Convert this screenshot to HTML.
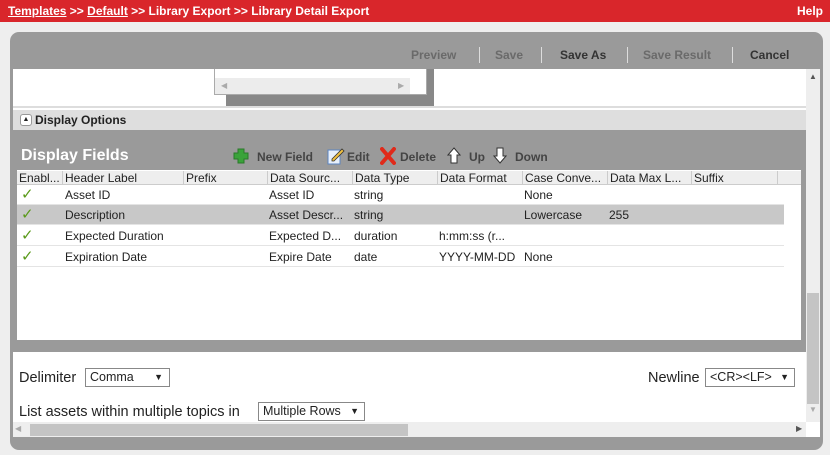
<!DOCTYPE html>
<html><head><style>
*{margin:0;padding:0;box-sizing:border-box}
body{width:830px;height:455px;background:#eeeeee;font-family:"Liberation Sans",sans-serif;font-size:12px;color:#222;position:relative;overflow:hidden}
.a{position:absolute}
.top{left:0;top:0;width:830px;height:22px;background:#d9262b;color:#fff;font-weight:bold;font-size:12px;line-height:22px;padding-left:8px}
.top u{color:#fff}
.panel{left:10px;top:32px;width:813px;height:418px;background:#9a9a9a;border-radius:9px}
.tb{top:48px;font-weight:bold;font-size:12px;color:#6a6a6a}
.sep{top:47px;width:1px;height:16px;background:#ddd}
.th{top:171px;height:14px;line-height:14px;font-size:12px}
.col{position:absolute;top:0;height:14px;border-left:1px solid #ccc;padding-left:2px;white-space:nowrap}
.row{left:17px;width:767px;height:20px;line-height:20px;border-bottom:1px solid #e4e4e4}
.row span{position:absolute;top:0;white-space:nowrap}
.sel{border:1px solid #888;background:#fff;height:19px;line-height:17px;padding-left:4px;font-size:12.5px}
.lbl{font-size:14.5px}
</style></head><body>
<div class="a top"><u>Templates</u> &gt;&gt; <u>Default</u> &gt;&gt; Library Export &gt;&gt; Library Detail Export<span style="position:absolute;right:7px">Help</span></div>
<div class="a panel"></div>
<div class="a tb" style="left:411px">Preview</div>
<div class="a sep" style="left:479px"></div>
<div class="a tb" style="left:495px">Save</div>
<div class="a sep" style="left:541px"></div>
<div class="a tb" style="left:560px;color:#333">Save As</div>
<div class="a sep" style="left:627px"></div>
<div class="a tb" style="left:643px">Save Result</div>
<div class="a sep" style="left:732px"></div>
<div class="a tb" style="left:750px;color:#333">Cancel</div>
<div class="a" style="left:13px;top:69px;width:793px;height:368px;background:#fff"></div>
<div class="a" style="left:226px;top:69px;width:208px;height:38px;background:#888"></div>
<div class="a" style="left:214px;top:69px;width:213px;height:26px;background:#fff;border:1px solid #aaa;border-top:none"></div>
<div class="a" style="left:215px;top:78px;width:195px;height:16px;background:#ececec;font-size:8px;color:#aaa;line-height:16px;padding-left:6px">◀<span style="position:absolute;left:183px">▶</span></div>
<div class="a" style="left:13px;top:106px;width:793px;height:2px;background:#ddd"></div>
<div class="a" style="left:13px;top:110px;width:793px;height:20px;background:#dedede;font-weight:bold;font-size:12px;line-height:20px;padding-left:22px;color:#222">Display Options</div>
<div class="a" style="left:20px;top:114px;width:12px;height:12px;background:#fff;border:1px solid #999;border-radius:3px;font-size:7px;line-height:10px;text-align:center">▲</div>
<div class="a" style="left:13px;top:130px;width:793px;height:222px;background:#9a9a9a"></div>
<div class="a" style="left:21px;top:147px;color:#fff;font-weight:bold;font-size:16px">Display Fields</div>
<div class="a" style="left:233px;top:148px;width:16px;height:16px"><svg width="16" height="16"><path d="M5 1h6v4h4v6h-4v4H5v-4H1V5h4z" fill="#3aa33a" stroke="#2a7a2a"/></svg></div>
<div class="a" style="left:257px;top:150px;font-weight:bold;color:#444">New Field</div>
<div class="a" style="left:327px;top:147px"><svg width="18" height="18"><rect x="1" y="3" width="12" height="14" fill="#e8f0fb" stroke="#5b84c0"/><path d="M5 12L15 2l2 2L7 14H5z" fill="#f0c040" stroke="#333" stroke-width=".8"/></svg></div>
<div class="a" style="left:347px;top:150px;font-weight:bold;color:#444">Edit</div>
<div class="a" style="left:380px;top:147px"><svg width="16" height="18"><path d="M2 2L14 16M14 2L2 16" stroke="#e02a1a" stroke-width="4" stroke-linecap="round"/></svg></div>
<div class="a" style="left:400px;top:150px;font-weight:bold;color:#444">Delete</div>
<div class="a" style="left:447px;top:147px"><svg width="14" height="17"><path d="M7 1L13 8H10V16H4V8H1Z" fill="#fff" stroke="#333"/></svg></div>
<div class="a" style="left:469px;top:150px;font-weight:bold;color:#444">Up</div>
<div class="a" style="left:493px;top:147px"><svg width="14" height="17"><path d="M7 16L13 9H10V1H4V9H1Z" fill="#fff" stroke="#333"/></svg></div>
<div class="a" style="left:515px;top:150px;font-weight:bold;color:#444">Down</div>
<div class="a" style="left:17px;top:170px;width:784px;height:170px;background:#fff"></div>
<div class="a th" style="left:17px;width:784px;background:#eee;border-bottom:1px solid #ccc">
<div class="col" style="left:0;border:none">Enabl...</div>
<div class="col" style="left:45px">Header Label</div>
<div class="col" style="left:166px">Prefix</div>
<div class="col" style="left:250px">Data Sourc...</div>
<div class="col" style="left:335px">Data Type</div>
<div class="col" style="left:420px">Data Format</div>
<div class="col" style="left:505px">Case Conve...</div>
<div class="col" style="left:590px">Data Max L...</div>
<div class="col" style="left:674px">Suffix</div>
<div class="col" style="left:760px"></div>
</div>
<div class="a row" style="top:185px"><span style="left:4px;color:#5a9a1a;font-size:15px">✓</span><span style="left:48px">Asset ID</span><span style="left:252px">Asset ID</span><span style="left:337px">string</span><span style="left:507px">None</span></div>
<div class="a row" style="top:205px;background:#c8c8c8"><span style="left:4px;color:#5a9a1a;font-size:15px">✓</span><span style="left:48px">Description</span><span style="left:252px">Asset Descr...</span><span style="left:337px">string</span><span style="left:507px">Lowercase</span><span style="left:592px">255</span></div>
<div class="a row" style="top:226px"><span style="left:4px;color:#5a9a1a;font-size:15px">✓</span><span style="left:48px">Expected Duration</span><span style="left:252px">Expected D...</span><span style="left:337px">duration</span><span style="left:422px">h:mm:ss (r...</span></div>
<div class="a row" style="top:247px"><span style="left:4px;color:#5a9a1a;font-size:15px">✓</span><span style="left:48px">Expiration Date</span><span style="left:252px">Expire Date</span><span style="left:337px">date</span><span style="left:422px">YYYY-MM-DD</span><span style="left:507px">None</span></div>
<div class="a lbl" style="left:19px;top:370px">Delimiter</div>
<div class="a sel" style="left:85px;top:368px;width:85px">Comma<span style="position:absolute;right:6px;font-size:9px">▼</span></div>
<div class="a lbl" style="left:648px;top:370px">Newline</div>
<div class="a sel" style="left:705px;top:368px;width:90px">&lt;CR&gt;&lt;LF&gt;<span style="position:absolute;right:5px;font-size:9px">▼</span></div>
<div class="a lbl" style="left:19px;top:404px">List assets within multiple topics in</div>
<div class="a sel" style="left:258px;top:402px;width:107px">Multiple Rows<span style="position:absolute;right:5px;font-size:9px">▼</span></div>
<div class="a" style="left:806px;top:69px;width:14px;height:368px;background:#eee"></div>
<div class="a" style="left:809px;top:72px;font-size:8px;color:#555">▲</div>
<div class="a" style="left:807px;top:293px;width:12px;height:111px;background:#c4c4c4"></div>
<div class="a" style="left:809px;top:405px;font-size:8px;color:#aaa">▼</div>
<div class="a" style="left:13px;top:422px;width:793px;height:15px;background:#eee"></div>
<div class="a" style="left:30px;top:424px;width:378px;height:12px;background:#c4c4c4"></div>
<div class="a" style="left:15px;top:424px;font-size:8px;color:#aaa">◀</div>
<div class="a" style="left:796px;top:424px;font-size:8px;color:#555">▶</div>
<div class="a" style="left:806px;top:422px;width:14px;height:15px;background:#fff"></div>
</body></html>
